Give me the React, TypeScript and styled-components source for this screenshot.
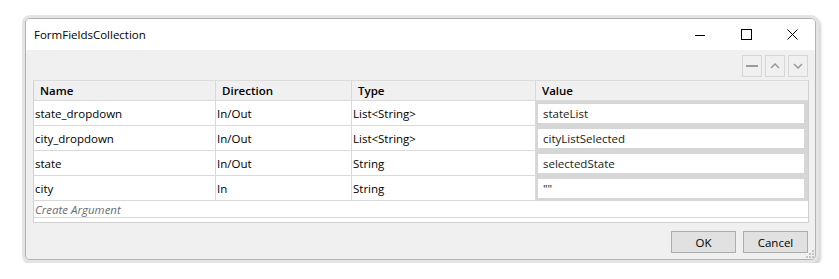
import * as React from 'react';
import styled, { createGlobalStyle } from 'styled-components';

const GlobalStyle = createGlobalStyle`
  *, *::before, *::after {
    box-sizing: border-box;
  }
  body {
    margin: 0;
    background: #ffffff;
    font-family: "Open Sans", "Noto Sans", sans-serif;
    font-size: 11.5px;
    color: #000;
  }
`;

const Page = styled.div`
  padding: 15px 0 0 22px;
`;

const Window = styled.div`
  width: 797px;
  height: 248px;
  border: 3px solid #e4e4e4;
  border-radius: 8px;
  box-shadow: 2px 3px 3px rgba(0, 0, 0, 0.18);
  background: #e4e4e4;
`;

const Frame = styled.div`
  height: 100%;
  border: 1px solid #b2b2b2;
  border-radius: 5px;
  overflow: hidden;
  display: flex;
  flex-direction: column;
`;

const TitleBar = styled.div`
  height: 31px;
  flex: none;
  background: #ffffff;
  display: flex;
  align-items: center;
  padding-left: 8px;
`;

const Title = styled.div`
  flex: 1;
  color: #000;
`;

const Caption = styled.div`
  width: 46px;
  height: 31px;
  display: flex;
  align-items: center;
  justify-content: center;
`;

const Body = styled.div`
  position: relative;
  flex: 1;
  background: #f0f0f0;
  display: flex;
  flex-direction: column;
  padding: 5px 6px 6px 7px;
`;

const Toolbar = styled.div`
  display: flex;
  justify-content: flex-end;
  gap: 3px;
  padding-right: 1px;
  margin-bottom: 3px;
`;

const ToolButton = styled.div`
  width: 20px;
  height: 22px;
  border: 1px solid #d6d6d6;
  background: #f0f0f0;
  display: flex;
  align-items: center;
  justify-content: center;
`;

const Grid = styled.div`
  display: grid;
  grid-template-columns: 182px 136px 184px 1fr;
  grid-template-rows: 20px repeat(4, 25px) 17px 4px;
  border: 1px solid #d0d0d0;
  border-top-color: #dcdcdc;
  background: #ffffff;
`;

const HeadCell = styled.div<{ $last?: boolean }>`
  background: #f0f0f0;
  border-right: ${p => (p.$last ? 'none' : '1px solid #d9d9d9')};
  border-bottom: 1px solid #d9d9d9;
  padding-left: 6px;
  font-weight: 600;
  display: flex;
  align-items: center;
`;

const Cell = styled.div`
  border-right: 1px solid #d9d9d9;
  border-bottom: 1px solid #d9d9d9;
  padding-left: 1px;
  display: flex;
  align-items: center;
`;

const ValueCell = styled.div`
  background: #d6d6d6;
  padding: 3px 4px 3px 2px;
  display: flex;
`;

const ValueBox = styled.div`
  flex: 1;
  background: #ffffff;
  display: flex;
  align-items: center;
  padding-left: 5px;
  color: #1a1a1a;
`;

const CreateRow = styled.div`
  grid-column: 1 / -1;
  border-bottom: 1px solid #d9d9d9;
  font-style: italic;
  color: #6d6d6d;
  padding-left: 1px;
  display: flex;
  align-items: center;
`;

const Spacer = styled.div`
  grid-column: 1 / -1;
`;

const Footer = styled.div`
  margin-top: auto;
  display: flex;
  justify-content: flex-end;
  gap: 7px;
  padding-right: 1px;
`;

const Button = styled.button`
  width: 65px;
  height: 22px;
  border: 1px solid #adadad;
  background: #e1e1e1;
  font-family: inherit;
  font-size: 11.5px;
  color: #000;
  padding: 0;
`;

const Grip = styled.svg`
  position: absolute;
  right: 1px;
  bottom: 1px;
`;

type Arg = { name: string; direction: string; type: string; value: string };

const args: Arg[] = [
  { name: 'state_dropdown', direction: 'In/Out', type: 'List<String>', value: 'stateList' },
  { name: 'city_dropdown', direction: 'In/Out', type: 'List<String>', value: 'cityListSelected' },
  { name: 'state', direction: 'In/Out', type: 'String', value: 'selectedState' },
  { name: 'city', direction: 'In', type: 'String', value: '""' },
];

const App = () => (
  <Page>
    <GlobalStyle />
    <Window>
      <Frame>
        <TitleBar>
          <Title>FormFieldsCollection</Title>
          <Caption>
            <svg width="10" height="10" viewBox="0 0 10 10">
              <path d="M0 5.5h10" stroke="#000" strokeWidth="1" />
            </svg>
          </Caption>
          <Caption>
            <svg width="11" height="11" viewBox="0 0 11 11">
              <rect x="0.5" y="0.5" width="10" height="10" fill="none" stroke="#000" strokeWidth="1" />
            </svg>
          </Caption>
          <Caption>
            <svg width="11" height="11" viewBox="0 0 11 11">
              <path d="M0.5 0.5l10 10M10.5 0.5l-10 10" stroke="#000" strokeWidth="1" />
            </svg>
          </Caption>
        </TitleBar>
        <Body>
          <Toolbar>
            <ToolButton>
              <svg width="12" height="4" viewBox="0 0 12 4">
                <rect x="0" y="1" width="12" height="2" fill="#9a9a9a" />
              </svg>
            </ToolButton>
            <ToolButton>
              <svg width="10" height="6" viewBox="0 0 10 6">
                <path d="M1 5l4-4 4 4" fill="none" stroke="#9a9a9a" strokeWidth="1.5" />
              </svg>
            </ToolButton>
            <ToolButton>
              <svg width="10" height="6" viewBox="0 0 10 6">
                <path d="M1 1l4 4 4-4" fill="none" stroke="#9a9a9a" strokeWidth="1.5" />
              </svg>
            </ToolButton>
          </Toolbar>
          <Grid>
            <HeadCell>Name</HeadCell>
            <HeadCell>Direction</HeadCell>
            <HeadCell>Type</HeadCell>
            <HeadCell $last>Value</HeadCell>
            {args.map(a => (
              <React.Fragment key={a.name}>
                <Cell>{a.name}</Cell>
                <Cell>{a.direction}</Cell>
                <Cell>{a.type}</Cell>
                <ValueCell>
                  <ValueBox>{a.value}</ValueBox>
                </ValueCell>
              </React.Fragment>
            ))}
            <CreateRow>Create Argument</CreateRow>
            <Spacer />
          </Grid>
          <Footer>
            <Button>OK</Button>
            <Button>Cancel</Button>
          </Footer>
          <Grip width="8" height="8" viewBox="0 0 8 8">
            <rect x="6" y="0" width="2" height="2" fill="#c4c4c4" />
            <rect x="3" y="3" width="2" height="2" fill="#c4c4c4" />
            <rect x="6" y="3" width="2" height="2" fill="#c4c4c4" />
            <rect x="0" y="6" width="2" height="2" fill="#c4c4c4" />
            <rect x="3" y="6" width="2" height="2" fill="#c4c4c4" />
            <rect x="6" y="6" width="2" height="2" fill="#c4c4c4" />
          </Grip>
        </Body>
      </Frame>
    </Window>
  </Page>
);

export default App;
